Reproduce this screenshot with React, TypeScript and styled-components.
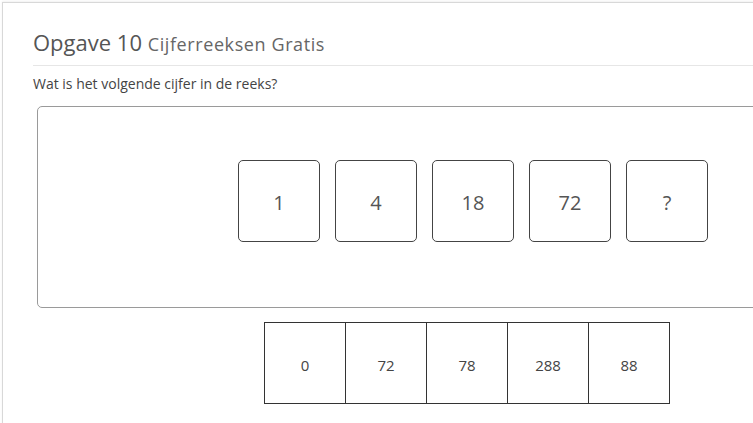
import styled, { createGlobalStyle } from "styled-components";

const GlobalStyle = createGlobalStyle`
  html, body {
    margin: 0;
    padding: 0;
    background: #fff;
    overflow: hidden;
  }
  body {
    font-family: "Open Sans", "DejaVu Sans", sans-serif;
    color: #555;
  }
`;

const sequence = ["1", "4", "18", "72", "?"];
const answers = ["0", "72", "78", "288", "88"];

const App = () => {
  return (
    <>
      <GlobalStyle />
      <Page>
        <Panel>
          <Title>
            Opgave 10 <small>Cijferreeksen Gratis</small>
          </Title>
          <Question>Wat is het volgende cijfer in de reeks?</Question>
          <SequenceBox>
            {sequence.map((n, i) => (
              <Card key={i}>{n}</Card>
            ))}
          </SequenceBox>
          <Answers>
            {answers.map((a, i) => (
              <Answer key={i}>{a}</Answer>
            ))}
          </Answers>
        </Panel>
      </Page>
    </>
  );
};

const Page = styled.div`
  padding: 2px 0 0 2px;
  width: 1000px;
`;

const Panel = styled.div`
  border-top: 1px solid #d8d8d8;
  border-left: 1px solid #d8d8d8;
  box-shadow: 0 -1px 2px rgba(0, 0, 0, 0.06);
  padding: 24px 0 40px 30px;
  width: 868px;
`;

const Title = styled.h1`
  margin: 0;
  padding-bottom: 6px;
  border-bottom: 1px solid #e6e6e6;
  font-size: 22px;
  font-weight: 400;
  line-height: 30px;
  color: #555;
  letter-spacing: 0;

  small {
    font-size: 18px;
    letter-spacing: 0.6px;
    color: #666;
  }
`;

const Question = styled.p`
  margin: 8px 0 0;
  font-size: 14px;
  line-height: 20px;
  color: #444;
`;

const SequenceBox = styled.div`
  margin: 12px 0 0 4px;
  width: 872px;
  height: 202px;
  box-sizing: border-box;
  border: 1px solid #9a9a9a;
  border-radius: 5px;
  display: flex;
  align-items: flex-start;
  justify-content: center;
  gap: 15px;
  padding-top: 53px;
`;

const Card = styled.div`
  width: 82px;
  height: 82px;
  box-sizing: border-box;
  border: 1px solid #444;
  border-radius: 5px;
  padding-top: 3px;
  display: flex;
  align-items: center;
  justify-content: center;
  font-size: 20px;
  color: #555;
`;

const Answers = styled.div`
  margin: 14px auto 0;
  display: flex;
  width: fit-content;
  border-left: 1px solid #333;
`;

const Answer = styled.div`
  width: 81px;
  height: 82px;
  box-sizing: border-box;
  border: 1px solid #333;
  border-left: none;
  padding-top: 4px;
  display: flex;
  align-items: center;
  justify-content: center;
  font-size: 15px;
  color: #444;
`;

export default App;
